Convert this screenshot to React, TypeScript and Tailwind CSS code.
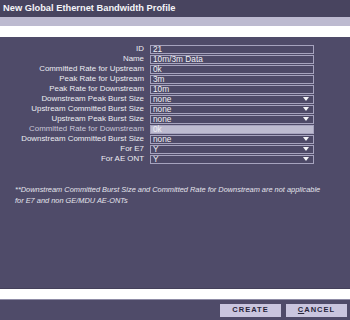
import React from "react";

type Row = { label: string; value: string; kind: "text" | "select" | "disabled" };

const rows: Row[] = [
  { label: "ID", value: "21", kind: "text" },
  { label: "Name", value: "10m/3m Data", kind: "text" },
  { label: "Committed Rate for Upstream", value: "0k", kind: "text" },
  { label: "Peak Rate for Upstream", value: "3m", kind: "text" },
  { label: "Peak Rate for Downstream", value: "10m", kind: "text" },
  { label: "Downstream Peak Burst Size", value: "none", kind: "select" },
  { label: "Upstream Committed Burst Size", value: "none", kind: "select" },
  { label: "Upstream Peak Burst Size", value: "none", kind: "select" },
  { label: "Committed Rate for Downstream", value: "0k", kind: "disabled" },
  { label: "Downstream Committed Burst Size", value: "none", kind: "select" },
  { label: "For E7", value: "Y", kind: "select" },
  { label: "For AE ONT", value: "Y", kind: "select" },
];

function Arrow() {
  return (
    <svg width="6" height="4" viewBox="0 0 6 4" className="shrink-0">
      <polygon points="0,0 6,0 3,4" fill="#f2f2f6" />
    </svg>
  );
}

export default function App() {
  return (
    <div
      className="w-[350px] h-[320px] flex flex-col bg-[#4f4b69] overflow-hidden"
      style={{ fontFamily: '"Liberation Sans", Arial, sans-serif' }}
    >
      <div className="h-[17px] shrink-0 bg-[#48445f] flex items-center pl-[3px] text-[9.3px] font-bold text-[#f4f4f8]">
        New Global Ethernet Bandwidth Profile
      </div>
      <div className="h-[9px] shrink-0 bg-[#bdbad0]" />
      <div className="h-[11px] shrink-0 bg-white" />
      <div className="flex-1 flex flex-col pt-[7px]">
        <div className="flex flex-col">
          {rows.map((r) => (
            <div key={r.label} className="h-[10px] flex items-center">
              <div
                className={
                  "w-[150px] pr-[6px] text-right text-[7.9px] leading-none whitespace-nowrap " +
                  (r.kind === "disabled" ? "text-[#c9c7d8]" : "text-[#ececf2]")
                }
              >
                {r.label}
              </div>
              <div
                className={
                  "w-[164px] h-[9px] border border-[#a6a3be] flex items-center pl-[2px] pr-[4px] text-[8.3px] leading-none " +
                  (r.kind === "disabled"
                    ? "bg-[#bdbbd0] text-[#efeef5]"
                    : "bg-[#4d4967] text-[#f0f0f5]")
                }
              >
                <span className="flex-1">{r.value}</span>
                {r.kind === "select" && <Arrow />}
              </div>
            </div>
          ))}
        </div>
        <div className="pl-[15px] pt-[20px] text-[7.4px] italic leading-[11px] text-[#e4e3ec]">
          <div>**Downstream Committed Burst Size and Committed Rate for Downstream are not applicable</div>
          <div>for E7 and non GE/MDU AE-ONTs</div>
        </div>
      </div>
      <div className="h-[1px] shrink-0 bg-[#44405a]" />
      <div className="h-[10px] shrink-0 bg-white" />
      <div className="h-[1px] shrink-0 bg-[#8f8ca6]" />
      <div className="h-[20px] shrink-0 flex items-center justify-end gap-[5px] pr-[3px] bg-[#4f4b69]">
        <div className="w-[61px] h-[13px] bg-[#c9c5de] flex items-center justify-center text-[7.5px] font-bold tracking-[1px] text-[#26243a]">
          CREATE
        </div>
        <div className="w-[61px] h-[13px] bg-[#c9c5de] flex items-center justify-center text-[7.5px] font-bold tracking-[1px] text-[#26243a]">
          <span className="underline">C</span>ANCEL
        </div>
      </div>
    </div>
  );
}
